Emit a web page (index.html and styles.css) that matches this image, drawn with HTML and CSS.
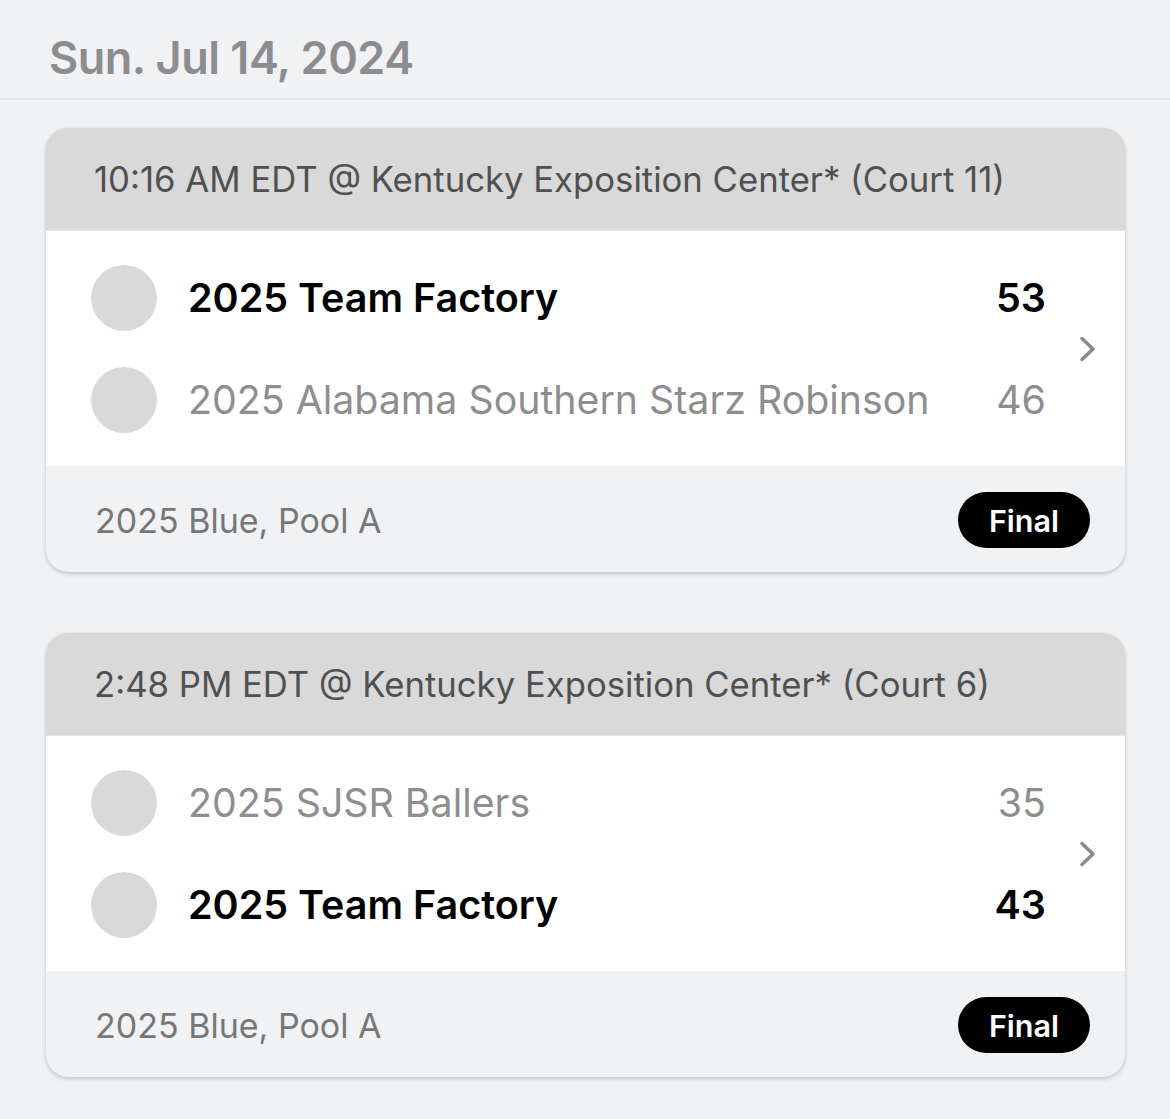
FILE: index.html
```html
<!DOCTYPE html>
<html>
<head>
<meta charset="utf-8">
<link rel="stylesheet" href="styles.css">
</head>
<body>
<div class="page">
  <div class="date-bar"><h1 class="date">Sun. Jul 14, 2024</h1></div>
  <div class="list">
    <div class="card">
      <div class="card-head">10:16 AM EDT @ Kentucky Exposition Center* (Court 11)</div>
      <div class="card-body">
        <div class="rows">
          <div class="row win"><span class="logo"></span><span class="name">2025 Team Factory</span><span class="score">53</span></div>
          <div class="row"><span class="logo"></span><span class="name">2025 Alabama Southern Starz Robinson</span><span class="score">46</span></div>
        </div>
        <svg class="chev" width="20" height="28" viewBox="0 0 20 28"><path d="M4 3.5 L15 14 L4 24.5" fill="none" stroke="#8a8a8a" stroke-width="3.5" stroke-linecap="round" stroke-linejoin="round"/></svg>
      </div>
      <div class="card-foot"><span class="pool">2025 Blue, Pool A</span><span class="pill">Final</span></div>
    </div>
    <div class="card">
      <div class="card-head">2:48 PM EDT @ Kentucky Exposition Center* (Court 6)</div>
      <div class="card-body">
        <div class="rows">
          <div class="row"><span class="logo"></span><span class="name">2025 SJSR Ballers</span><span class="score">35</span></div>
          <div class="row win"><span class="logo"></span><span class="name">2025 Team Factory</span><span class="score">43</span></div>
        </div>
        <svg class="chev" width="20" height="28" viewBox="0 0 20 28"><path d="M4 3.5 L15 14 L4 24.5" fill="none" stroke="#8a8a8a" stroke-width="3.5" stroke-linecap="round" stroke-linejoin="round"/></svg>
      </div>
      <div class="card-foot"><span class="pool">2025 Blue, Pool A</span><span class="pill">Final</span></div>
    </div>
  </div>
</div>
</body>
</html>
```
FILE: styles.css
```css
html, body { margin: 0; padding: 0; }
body {
  background: #f1f2f4;
  font-family: Inter, "Noto Sans", sans-serif;
  width: 1170px;
  height: 1119px;
  overflow: hidden;
}
.date-bar {
  height: 100px;
  border-bottom: 2px solid #e8e9eb;
  box-sizing: border-box;
  padding: 16px 0 0 49px;
  display: flex;
  align-items: center;
}
.date {
  margin: 0;
  font-size: 45px;
  font-weight: 600;
  color: #8d8d90;
  letter-spacing: -0.5px;
}
.list {
  padding: 28px 45px 0 46px;
  display: flex;
  flex-direction: column;
  gap: 61px;
}
.card {
  border-radius: 22px;
  overflow: hidden;
  background: #f1f2f4;
  box-shadow: 0 2px 4px rgba(0,0,0,0.18), 0 0 1px rgba(0,0,0,0.12);
}
.card-head {
  height: 103px;
  background: #d9d9d9;
  border-bottom: 1px solid #e4e4e4;
  box-sizing: border-box;
  display: flex;
  align-items: center;
  padding-left: 48px;
  font-size: 34.7px;
  color: #505050;
}
.card-body {
  background: #fff;
  height: 235px;
  display: flex;
  align-items: center;
  padding: 0 27px 0 45px;
}
.rows {
  flex: 1;
  display: flex;
  flex-direction: column;
}
.row {
  height: 102px;
  display: flex;
  align-items: center;
  font-size: 39.3px;
  color: #8e8e8e;
}
.row.win { color: #000; font-weight: 600; font-size: 39.5px; }
.logo {
  width: 66px;
  height: 66px;
  border-radius: 50%;
  background: #d9d9d9;
  flex: none;
  margin-right: 31px;
}
.name { flex: 1; }
.score { margin-right: 32px; }
.chev { flex: none; }
.card-foot {
  height: 106px;
  display: flex;
  align-items: center;
  justify-content: space-between;
  padding: 2px 35px 0 49px;
  box-sizing: border-box;
}
.pool { font-size: 34px; color: #777; }
.pill {
  background: #000;
  color: #fff;
  height: 56px;
  padding: 0 31px;
  border-radius: 28px;
  display: flex;
  align-items: center;
  font-size: 30.5px;
  font-weight: 600;
}
```
